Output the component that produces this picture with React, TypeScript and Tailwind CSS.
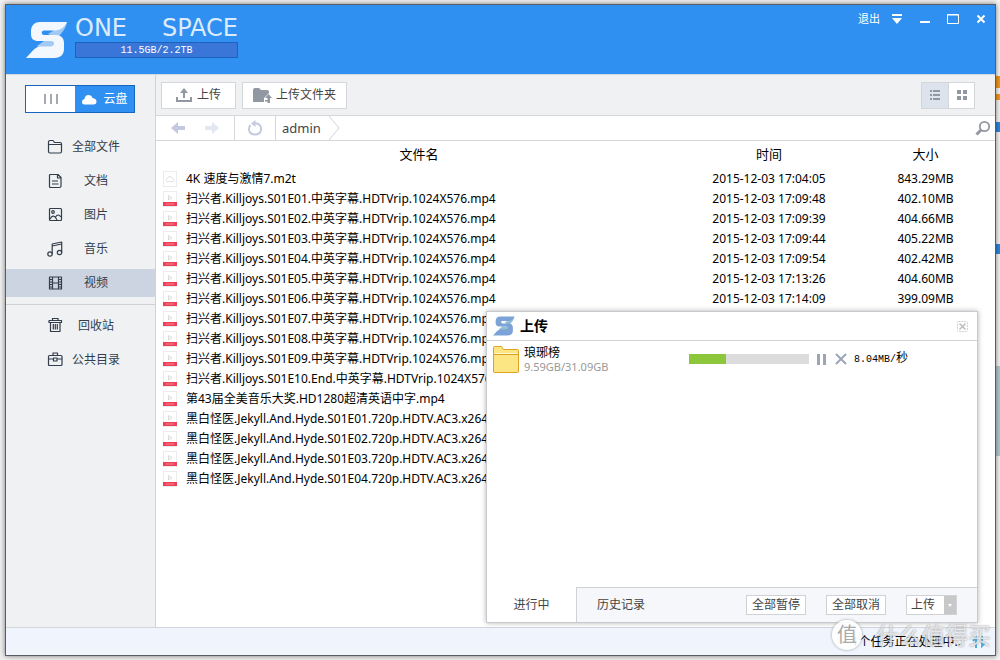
import type { ReactNode } from "react"
import clsx from "clsx"

type FileRow = { name: string; kind: "raw" | "video"; time?: string; size?: string }

const files: FileRow[] = [
  { name: "4K 速度与激情7.m2t", kind: "raw", time: "2015-12-03 17:04:05", size: "843.29MB" },
  { name: "扫兴者.Killjoys.S01E01.中英字幕.HDTVrip.1024X576.mp4", kind: "video", time: "2015-12-03 17:09:48", size: "402.10MB" },
  { name: "扫兴者.Killjoys.S01E02.中英字幕.HDTVrip.1024X576.mp4", kind: "video", time: "2015-12-03 17:09:39", size: "404.66MB" },
  { name: "扫兴者.Killjoys.S01E03.中英字幕.HDTVrip.1024X576.mp4", kind: "video", time: "2015-12-03 17:09:44", size: "405.22MB" },
  { name: "扫兴者.Killjoys.S01E04.中英字幕.HDTVrip.1024X576.mp4", kind: "video", time: "2015-12-03 17:09:54", size: "402.42MB" },
  { name: "扫兴者.Killjoys.S01E05.中英字幕.HDTVrip.1024X576.mp4", kind: "video", time: "2015-12-03 17:13:26", size: "404.60MB" },
  { name: "扫兴者.Killjoys.S01E06.中英字幕.HDTVrip.1024X576.mp4", kind: "video", time: "2015-12-03 17:14:09", size: "399.09MB" },
  { name: "扫兴者.Killjoys.S01E07.中英字幕.HDTVrip.1024X576.mp4", kind: "video" },
  { name: "扫兴者.Killjoys.S01E08.中英字幕.HDTVrip.1024X576.mp4", kind: "video" },
  { name: "扫兴者.Killjoys.S01E09.中英字幕.HDTVrip.1024X576.mp4", kind: "video" },
  { name: "扫兴者.Killjoys.S01E10.End.中英字幕.HDTVrip.1024X576.mp4", kind: "video" },
  { name: "第43届全美音乐大奖.HD1280超清英语中字.mp4", kind: "video" },
  { name: "黑白怪医.Jekyll.And.Hyde.S01E01.720p.HDTV.AC3.x264", kind: "video" },
  { name: "黑白怪医.Jekyll.And.Hyde.S01E02.720p.HDTV.AC3.x264", kind: "video" },
  { name: "黑白怪医.Jekyll.And.Hyde.S01E03.720p.HDTV.AC3.x264", kind: "video" },
  { name: "黑白怪医.Jekyll.And.Hyde.S01E04.720p.HDTV.AC3.x264", kind: "video" },
]

const upload = { name: "琅琊榜", done: 9.59, total: 31.09, speed: "8.04MB/" }

function SwiftLogo({ className, main, fold }: { className?: string; main: string; fold: string }) {
  return (
    <svg viewBox="0 0 42 38" className={className} aria-hidden="true">
      <path d="M41 1C40 7 36 12 31 17L22 13L30 8Z" fill={fold} />
      <path d="M11 25L18 20H28V26L18 30Z" fill={fold} />
      <path
        d="M41 1H14C8 1 5 5 5 10V13C5 18 8 20 12 20H25C29 20 29 25 25 25.500H14C10 26 8 28 0 37H28C35 37 38 33 38 28V22C38 17 35 14 30 14H18C15 14 15 9.500 18 9.500H30Q38 8 41 1Z"
        fill={main}
      />
    </svg>
  )
}

function LineIcon({ children }: { children: ReactNode }) {
  return (
    <svg
      viewBox="0 0 16 16"
      className="w-4 h-4 shrink-0"
      fill="none"
      stroke="#333d4b"
      strokeWidth="1.2"
      strokeLinejoin="round"
      aria-hidden="true"
    >
      {children}
    </svg>
  )
}

const categories = [
  {
    label: "全部文件",
    icon: <path d="M1.5 12.5V3Q1.5 1.5 3 1.5H6L7.5 3.5H13Q14.5 3.5 14.5 5V12.5Q14.5 14 13 14H3Q1.5 14 1.5 12.5ZM1.5 5.5H14.5" />,
  },
  {
    label: "文档",
    icon: <path d="M3.5 1.5H11L14 4.5V13Q14 14.5 12.5 14.5H3.5Q2.500 14.5 2.500 13.5V2.500Q2.500 1.500 3.500 1.500ZM10.500 1.500V5H14M5 8H11M5 11H11.500" />,
  },
  {
    label: "图片",
    icon: (
      <>
        <rect x="2.500" y="1.500" width="12" height="12" rx="1" />
        <circle cx="6" cy="5" r="1.300" />
        <path d="M3 12Q6 7 8.500 10.500L10 13M8.500 10Q11 6 14 10" />
      </>
    ),
  },
  {
    label: "音乐",
    icon: (
      <>
        <circle cx="3" cy="13" r="2.200" />
        <circle cx="12.500" cy="11.500" r="2.200" />
        <path d="M5.200 13V3L14.700 1V11.500M5.200 5L14.700 3" />
      </>
    ),
  },
  {
    label: "视频",
    icon: <path d="M2.500 2H14.500V14H2.500ZM5.500 2V14M11.500 2V14M5.500 8H11.500M2.500 4.500H5.500M2.500 7H5.500M2.500 9.500H5.500M2.500 12H5.500M11.500 4.500H14.500M11.500 7H14.500M11.500 9.500H14.500M11.500 12H14.500" />,
  },
]

const places = [
  {
    label: "回收站",
    icon: <path d="M5.500 2.500V0.500H11V2.500M3.500 5V13.500H13V5M6.300 6V11.500M8.300 6V11.500M10.300 6V11.500M2 4.500H14.500V2.500H2Z" />,
  },
  {
    label: "公共目录",
    icon: <path d="M2.500 3.500H14Q15 3.500 15 4.500V12.500Q15 13.500 14 13.500H2.500Q1.500 13.500 1.500 12.500V4.500Q1.500 3.500 2.500 3.500ZM6 3.500V1H10.500V3.500M1.500 7H6.500M10 7H15M6.500 6H10V9H6.500Z" />,
  },
]

function NavItem({ label, icon, active }: { label: string; icon: ReactNode; active?: boolean }) {
  return (
    <button
      type="button"
      className={clsx("flex items-center h-7 w-full pl-[41px] gap-2 text-[#333d4b]", active && "bg-[#cdd4e1]")}
    >
      <LineIcon>{icon}</LineIcon>
      <span className="w-[50px] text-center leading-5">{label}</span>
    </button>
  )
}

function FileIcon({ kind }: { kind: FileRow["kind"] }) {
  return (
    <svg viewBox="0 0 14 16" className="w-[14px] h-4 shrink-0" fill="none" aria-hidden="true">
      <rect x="0.500" y="0.500" width="13" height="15" fill="#fff" stroke="#ececec" />
      {kind === "video" ? (
        <>
          <path d="M5.500 4.500V9L9 6.800Z" stroke="#dadada" />
          <rect y="11" width="14" height="4" fill="#ee4058" />
          <path d="M3 13H11" stroke="#f4808f" />
        </>
      ) : (
        <path d="M4 10.500H10Q11.500 10 11 8.500Q10.500 7.500 9.500 7.500Q9 5.500 7 5.500Q5 5.500 4.500 7.500Q2.500 8 3 9.500Q3.300 10.500 4 10.500Z" stroke="#e2e2e2" />
      )}
    </svg>
  )
}

function Header() {
  return (
    <header className="flex items-start justify-between h-[70px] bg-[#3090f1] border-b border-[#d5d9df] pl-5">
      <div className="flex items-start gap-[7px] pt-[15px]">
        <SwiftLogo className="w-[42px] h-10" main="#f3f8fe" fold="#a3caf5" />
        <div className="w-[163px]">
          <h1 className="flex h-[22px] justify-between font-['DejaVu_Sans',sans-serif] text-[24px] leading-4 text-[#dcebfb]">
            <span>ONE</span>
            <span>SPACE</span>
          </h1>
          <div className="h-4 border border-[#1b63bd] bg-[#3a76d8] text-center font-['Liberation_Mono',monospace] text-[10px] leading-[15px] text-white">
            11.5GB/2.2TB
          </div>
        </div>
      </div>

      <div className="flex items-center pt-1 pr-2 text-white">
        <button type="button" className="h-5 px-[11px] text-[11px] leading-5">退出</button>
        <button type="button" aria-label="菜单" className="mr-4">
          <svg viewBox="0 0 12 12" className="w-3 h-3" fill="#fff">
            <path d="M1 1H11V3H1ZM1 5H11L6 11Z" />
          </svg>
        </button>
        <button type="button" aria-label="最小化" className="mr-4">
          <svg viewBox="0 0 12 12" className="w-3 h-3" fill="#fff">
            <path d="M1 8H11V10H1Z" />
          </svg>
        </button>
        <button type="button" aria-label="最大化" className="mr-4">
          <svg viewBox="0 0 12 12" className="w-3 h-3" fill="none" stroke="#fff">
            <path d="M1 2H11M0.500 1.500H11.500V10.500H0.500Z" />
          </svg>
        </button>
        <button type="button" aria-label="关闭">
          <svg viewBox="0 0 12 12" className="w-3 h-3" fill="none" stroke="#fff" strokeWidth="2">
            <path d="M2.500 2.500L9.500 9.500M9.500 2.500L2.500 9.500" />
          </svg>
        </button>
      </div>
    </header>
  )
}

function Sidebar() {
  return (
    <aside className="w-[150px] shrink-0 border-r border-[#cfd1d4] bg-[#eff1f3] pt-[10px]">
      <div className="flex h-7 w-[110px] ml-[19px] border border-[#1565c0] bg-white">
        <button type="button" aria-label="本地" className="flex w-[49px] items-center justify-center">
          <svg viewBox="0 0 16 10" className="w-4 h-[10px]" stroke="#a5a9b0" strokeWidth="2">
            <path d="M2 0V10M8 0V10M14 0V10" />
          </svg>
        </button>
        <button type="button" className="flex flex-1 items-center justify-center gap-[6px] bg-[#3090f1] text-white">
          <svg viewBox="0 0 16 11" className="w-4 h-[11px]" fill="#fff" aria-hidden="true">
            <path d="M3.500 10.500Q1 10.500 1 8Q1 5.500 3.500 5Q4 1 7.500 1Q10.500 1 11.500 4Q15.500 4.500 15.500 7.500Q15.500 10.500 12.500 10.500Z" />
          </svg>
          云盘
        </button>
      </div>

      <nav className="mt-5">
        <div className="flex flex-col gap-[6px]">
          {categories.map((item) => (
            <NavItem key={item.label} {...item} active={item.label === "视频"} />
          ))}
        </div>
        <div className="my-[7px] h-px bg-[#cfd1d4]" />
        <div className="flex flex-col gap-[6px]">
          {places.map((item) => (
            <NavItem key={item.label} {...item} />
          ))}
        </div>
      </nav>
    </aside>
  )
}

function Toolbar() {
  return (
    <div className="flex items-center justify-between h-[41px] border-b border-[#d5d7da] bg-[#eff1f3] pl-[5px] pr-5 text-[#444]">
      <div className="flex gap-[6px]">
        <button type="button" className="flex h-[27px] items-center gap-1 border border-[#d4d6d9] bg-white px-[14px]">
          <svg viewBox="0 0 17 14" className="w-[17px] h-[14px]" fill="#9298a1" aria-hidden="true">
            <path d="M8 0L12 5H9V10H7V5H4ZM0 9H2V12H14V9H16V14H0Z" />
          </svg>
          上传
        </button>
        <button type="button" className="flex h-[27px] items-center gap-1 border border-[#d4d6d9] bg-white px-[10px]">
          <svg viewBox="0 0 19 15" className="w-[19px] h-[15px]" fill="#9298a1" aria-hidden="true">
            <path d="M0 2Q0 0 2 0H6L8 2H14Q16 2 16 4V5L11 10V14H0Z" />
            <path d="M15.500 6L19 10H17V15H14.500V13.500H12V12H14.500V10H12Z" />
          </svg>
          上传文件夹
        </button>
      </div>
      <div className="flex h-[27px] border border-[#d4d6d9] bg-white">
        <button type="button" aria-label="列表视图" className="flex w-[26px] items-center justify-center bg-[#dde3ec]">
          <svg viewBox="0 0 10 10" className="w-[10px] h-[10px]" fill="#9298a1">
            <path d="M0 0H2V2H0ZM3 0H10V2H3ZM0 4H2V6H0ZM3 4H10V6H3ZM0 8H2V10H0ZM3 8H10V10H3Z" />
          </svg>
        </button>
        <button type="button" aria-label="图标视图" className="flex w-[26px] items-center justify-center border-l border-[#d4d6d9]">
          <svg viewBox="0 0 10 10" className="w-[10px] h-[10px]" fill="#9298a1">
            <path d="M0 0H4V4H0ZM6 0H10V4H6ZM0 6H4V10H0ZM6 6H10V10H6Z" />
          </svg>
        </button>
      </div>
    </div>
  )
}

function AddressBar() {
  return (
    <div className="flex h-[25px] border-b border-[#d5d7da] bg-white">
      <div className="flex w-[79px] items-center justify-center gap-[20px] border-r border-[#d5d7da]">
        <button type="button" aria-label="后退">
          <svg viewBox="0 0 14 12" className="w-[14px] h-3" fill="#c3cadf">
            <path d="M0 6L7 0V4H14V8H7V12Z" />
          </svg>
        </button>
        <button type="button" aria-label="前进">
          <svg viewBox="0 0 14 12" className="w-[14px] h-3" fill="#e3e7f2">
            <path d="M14 6L7 0V4H0V8H7V12Z" />
          </svg>
        </button>
      </div>
      <button type="button" aria-label="刷新" className="flex w-[41px] items-center justify-center border-r border-[#d5d7da]">
        <svg viewBox="0 0 16 16" className="w-4 h-4" fill="none">
          <path d="M3.500 5Q1.500 7 2 10Q3 14.500 8 14.500Q13 14.500 14 10Q14.500 5 10 3.500H7" stroke="#c3cadf" strokeWidth="2" />
          <path d="M8.500 0V7L4 3.500Z" fill="#c3cadf" />
        </svg>
      </button>
      <a href="#admin" className="flex items-center pt-[2px] pl-[6px] text-[13px] text-[#444]">admin</a>
      <svg viewBox="0 0 11 24" className="ml-2 h-6 w-[11px]" fill="none" stroke="#d0d2d6" aria-hidden="true">
        <path d="M0 0L10 12L0 24" />
      </svg>
      <button type="button" aria-label="搜索" className="ml-auto mr-1">
        <svg viewBox="0 0 16 16" className="w-4 h-4" fill="none" stroke="#9298a1">
          <circle cx="9.500" cy="6.500" r="4.700" strokeWidth="1.800" />
          <path d="M6 10L1.500 14.500" strokeWidth="3" />
        </svg>
      </button>
    </div>
  )
}

function FileTable() {
  return (
    <table className="w-full table-fixed text-black">
      <thead>
        <tr className="h-7">
          <th className="font-normal text-[13px]">文件名</th>
          <th className="w-[174px] font-normal text-[13px]">时间</th>
          <th className="w-[139px] font-normal text-[13px]">大小</th>
        </tr>
      </thead>
      <tbody>
        {files.map((file) => (
          <tr key={file.name} className="h-5">
            <td className="p-0">
              <div className="flex items-center gap-[9px] pl-[7px] leading-5 whitespace-nowrap">
                <FileIcon kind={file.kind} />
                {file.name}
              </div>
            </td>
            <td className="p-0 text-center">{file.time}</td>
            <td className="p-0 text-center">{file.size}</td>
          </tr>
        ))}
      </tbody>
    </table>
  )
}

function UploadDialog() {
  const percent = (upload.done / upload.total) * 100

  return (
    <section
      aria-label="上传"
      className="absolute right-[17px] bottom-1 z-10 flex w-[492px] min-h-[312px] flex-col border border-[#c8cacf] bg-white shadow-[0_0_5px_rgba(0,0,0,0.3)]"
    >
      <div className="flex h-[29px] items-center gap-[5px] border-b border-[#d0d2d5] pl-[6px] pr-[9px]">
        <SwiftLogo className="w-[22px] h-5" main="#7ba3d8" fold="#8fbfd0" />
        <h2 className="text-[14px] font-bold text-black">上传</h2>
        <button type="button" aria-label="关闭" className="ml-auto">
          <svg viewBox="0 0 11 11" className="w-[11px] h-[11px]" fill="none" stroke="#bdbdbd">
            <rect x="0.500" y="0.500" width="10" height="10" rx="1" stroke="#d0d0d0" strokeDasharray="2 1" />
            <path d="M2.500 2.500L8.500 8.500M8.500 2.500L2.500 8.500" strokeWidth="1.500" />
          </svg>
        </button>
      </div>

      <div className="flex flex-1 items-start pt-1 pl-[6px] pr-[69px]">
        <svg viewBox="0 0 26 27" className="w-[26px] h-[27px] mt-px" fill="#fce583" stroke="#e0a020" aria-hidden="true">
          <path d="M0.500 25V1.500Q0.500 0.500 1.500 0.500H8.500L10.500 3.500H24.500Q25.500 3.500 25.500 4.500V25Q25.500 26.500 24.500 26.500H1.500Q0.500 26.500 0.500 25Z" />
          <path d="M0.500 8.500H25.500" />
          <path d="M1.500 7.500H24.500" stroke="#fff8d8" />
        </svg>
        <div className="ml-[5px] pt-px">
          <p className="leading-[14px] text-black">{upload.name}</p>
          <p className="text-[11px] leading-[14px] text-[#999]">
            {upload.done}GB/{upload.total}GB
          </p>
        </div>
        <div className="ml-auto flex h-7 items-center">
          <div
            role="progressbar"
            aria-label={upload.name}
            aria-valuenow={Math.round(percent)}
            className="h-[10px] w-[120px] bg-[#dcdcdc]"
          >
            <div className="h-full bg-[#8cc63a]" style={{ width: `${percent}%` }} />
          </div>
          <button type="button" aria-label="暂停" className="ml-2">
            <svg viewBox="0 0 9 11" className="w-[9px] h-[11px]" fill="#9ba5b5">
              <path d="M0 0H3V11H0ZM6 0H9V11H6Z" />
            </svg>
          </button>
          <button type="button" aria-label="取消" className="ml-[9px]">
            <svg viewBox="0 0 12 12" className="w-3 h-3" stroke="#9ba5b5" strokeWidth="2">
              <path d="M1 1L11 11M11 1L1 11" />
            </svg>
          </button>
          <span className="ml-[7px] font-['Liberation_Mono','Noto_Sans_CJK_SC',monospace] text-[10px] text-black">
            {upload.speed}
            <span className="text-xs">秒</span>
          </span>
        </div>
      </div>

      <div className="flex h-[35px] text-[#444]">
        <button type="button" className="w-[89px]">进行中</button>
        <div className="flex flex-1 items-center border-t border-l border-[#d0d2d5] bg-[#f5f7fa] pl-5 pr-5">
          <button type="button">历史记录</button>
          <div className="ml-auto flex gap-5">
            <button type="button" className="h-5 w-[60px] border border-[#d0d2d5] bg-white leading-[18px]">全部暂停</button>
            <button type="button" className="h-5 w-[60px] border border-[#d0d2d5] bg-white leading-[18px]">全部取消</button>
            <button type="button" className="flex h-5 border border-[#d0d2d5] bg-white pl-1 leading-[18px]">
              上传
              <span className="ml-[9px] flex w-3 h-full items-center justify-center bg-[#c8c8c8]">
                <svg viewBox="0 0 4 3" className="w-1 h-[3px]" fill="#fff" aria-hidden="true">
                  <path d="M0 0H4L2 3Z" />
                </svg>
              </span>
            </button>
          </div>
        </div>
      </div>
    </section>
  )
}

function StatusBar() {
  return (
    <footer className="relative flex h-7 items-center justify-end gap-[10px] border-t border-[#d3d6dc] bg-[#f0f4fc] pr-2 text-black">
      <span>1个任务正在处理中..</span>
      <svg viewBox="0 0 16 16" className="w-4 h-4" fill="none" stroke="#45b0ee" strokeWidth="2" aria-hidden="true">
        <path d="M5 14V4L2 7M11 2V12L14 9" />
      </svg>
      {/* Site stamp over the corner */}
      <div className="absolute right-1 bottom-[5px] z-20 flex items-center gap-[14px] text-white/70 [text-shadow:0_0_2px_#888]">
        <span className="flex h-[30px] w-[30px] items-center justify-center rounded-full bg-white/90 text-[20px] text-[#aaa] shadow-[0_0_3px_#999] [text-shadow:none]">
          值
        </span>
        <span className="text-[23px] leading-[30px]">什么值得买</span>
      </div>
    </footer>
  )
}

export default function App() {
  return (
    <div className="relative flex min-h-screen bg-[#efefef] pt-1 pr-1 pb-1 pl-[5px] font-['Noto_Sans','Noto_Sans_CJK_SC',sans-serif] text-xs">
      {/* Slice of the page behind the window */}
      <div className="absolute inset-y-0 right-0 flex w-1 flex-col bg-[#f4f4f4]">
        <div className="mt-[76px] h-3 bg-[#f39a1a]" />
        <div className="mt-[6px] h-[6px] bg-[#f39a1a]" />
        <div className="mt-[22px] h-[10px] bg-[#2c86e0]" />
        <div className="mt-28 h-[10px] bg-[#2c86e0]" />
        <div className="mt-28 h-[90px] bg-[#b5c8cf]" />
      </div>

      <div className="relative flex flex-1 flex-col border border-[#5a5d61] bg-white shadow-[0_0_5px_rgba(0,0,0,0.5)]">
        <Header />
        <div className="relative flex flex-1">
          <Sidebar />
          <main className="min-w-0 flex-1">
            <Toolbar />
            <AddressBar />
            <FileTable />
          </main>
          <UploadDialog />
        </div>
        <StatusBar />
      </div>
    </div>
  )
}
